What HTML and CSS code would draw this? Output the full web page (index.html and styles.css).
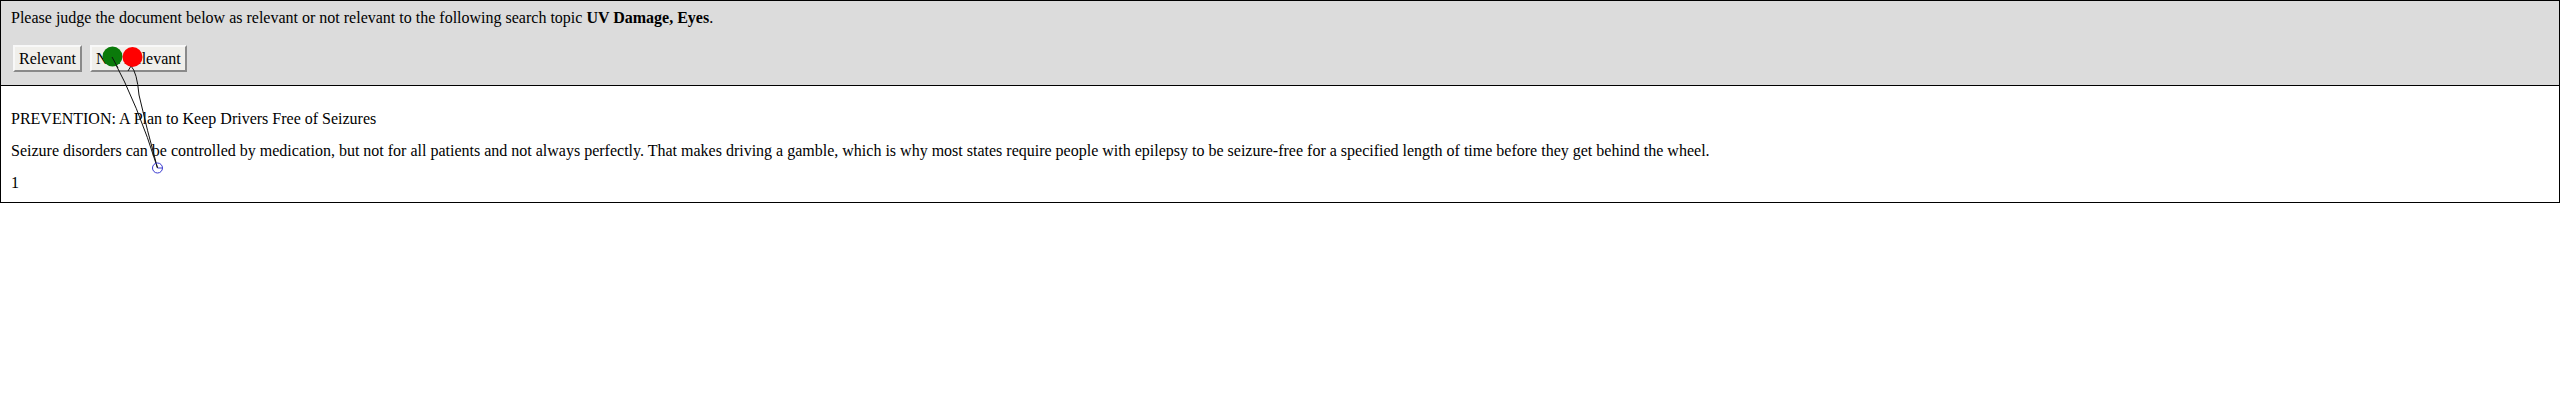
FILE: index.html
```html
<!DOCTYPE html>
<html>
<head>
<meta charset="utf-8">
<link rel="stylesheet" href="styles.css">
</head>
<body>
<div class="judge">
  <div class="prompt">Please judge the document below as relevant or not relevant to the following search topic <b>UV Damage, Eyes</b>.</div>
  <div class="actions">
    <button class="btn">Relevant</button>
    <button class="btn">Not Relevant</button>
  </div>
</div>
<div class="doc">
  <p class="line">PREVENTION: A Plan to Keep Drivers Free of Seizures</p>
  <p class="line">Seizure disorders can be controlled by medication, but not for all patients and not always perfectly. That makes driving a gamble, which is why most states require people with epilepsy to be seizure-free for a specified length of time before they get behind the wheel.</p>
  <p class="line last">1</p>
</div>
<svg class="trace" width="220" height="200" viewBox="0 0 220 200">
  <path d="M112 57 Q138 105 157.5 168" fill="none" stroke="#111" stroke-width="1"/>
  <path d="M128 71 L131 66 Q137 72 139 95 Q147 130 157.5 168" fill="none" stroke="#111" stroke-width="1"/>
  <circle cx="112.5" cy="56.5" r="10" fill="#0a7a0a"/>
  <circle cx="132.5" cy="57" r="10" fill="#ff0000"/>
  <path d="M112 57 L118 68" fill="none" stroke="#111" stroke-width="1"/>
  <circle cx="157.5" cy="168" r="5" fill="none" stroke="#3a3ad0" stroke-width="1"/>
  <path d="M157.5 168 H162" fill="none" stroke="#3a3ad0" stroke-width="1"/>
</svg>
</body>
</html>
```
FILE: styles.css
```css
html, body {
  margin: 0;
  padding: 0;
  background: #fff;
}
body {
  font-family: "Liberation Serif", "Times New Roman", serif;
  font-size: 16px;
  line-height: 18px;
  color: #000;
  position: relative;
}
.judge {
  background: #dcdcdc;
  border: 1px solid #000;
  padding: 8px 10px 13px;
}
.prompt b {
  font-weight: bold;
}
.actions {
  display: flex;
  gap: 8px;
  margin-top: 18px;
  padding-left: 2px;
}
.btn {
  font-family: "Liberation Serif", "Times New Roman", serif;
  font-size: 16px;
  line-height: 18px;
  color: #000;
  background: #f0efeb;
  border: 2px solid;
  border-color: #f8f8f8 #8a8a8a #8a8a8a #f8f8f8;
  padding: 3px 4px 2px;
  margin: 0;
}
.doc {
  border: 1px solid #000;
  border-top: none;
  padding: 10px 10px 10px;
}
.line {
  margin: 14px 0;
}
.line:first-child {
  margin-top: 14px;
}
.line.last {
  margin-bottom: 0;
}
.trace {
  position: absolute;
  left: 0;
  top: 0;
  pointer-events: none;
}
```
